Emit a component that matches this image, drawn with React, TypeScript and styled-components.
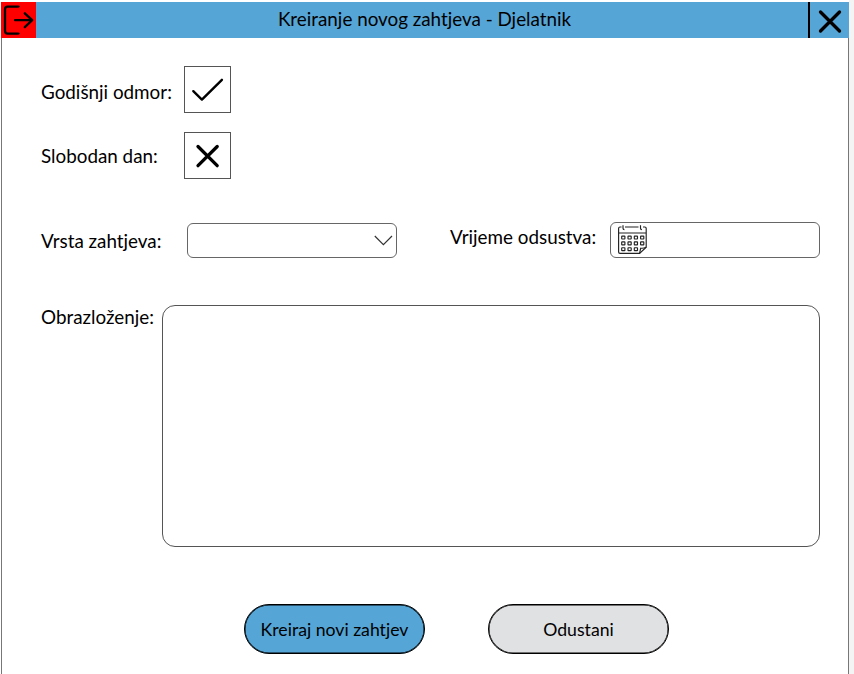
import React from "react";
import styled, { createGlobalStyle } from "styled-components";

const GlobalStyle = createGlobalStyle`
  *, *::before, *::after { box-sizing: border-box; }
  body { margin: 0; background: #f4f4f4; }
`;

const Page = styled.div`
  width: 854px;
  height: 674px;
  padding: 0 5px 0 1px;
  overflow: hidden;
  background: linear-gradient(to right, #fff 0 849px, #f4f4f4 849px);
  color: #000;
  font-family: Lato, "Liberation Sans", sans-serif;
  font-size: 18.83px;
  line-height: 24px;
`;

const Window = styled.main`
  height: 674px;
  padding-top: 2px;
  display: flex;
  flex-direction: column;
`;

const TitleBar = styled.header`
  flex: none;
  display: grid;
  grid-template-columns: 35px 1fr 41px;
  height: 36px;
  background: #55a6d7;
`;

const Title = styled.h1`
  margin: 0;
  padding: 5px 0 0 5px;
  font-size: 18.83px;
  font-weight: 400;
  line-height: 24px;
  text-align: center;
  white-space: nowrap;
`;

const IconButton = styled.button<{ $exit?: boolean }>`
  display: block;
  padding: 0;
  border: 0;
  border-left: ${(p) => (p.$exit ? "0" : "2px solid #000")};
  background: ${(p) => (p.$exit ? "#ff0000" : "transparent")};
  svg { display: block; }
`;

const Form = styled.form`
  flex: 1;
  padding: 28px 28px 0 39px;
  border-left: 1px solid #777;
  border-right: 1px solid #777;
`;

const Row = styled.div<{ $gap: number }>`
  display: flex;
  align-items: flex-start;
  margin-bottom: ${(p) => p.$gap}px;
`;

const Label = styled.label<{ $width: number; $top: number }>`
  flex: none;
  width: ${(p) => p.$width}px;
  padding-top: ${(p) => p.$top}px;
  white-space: nowrap;
`;

const CheckBox = styled.button`
  display: block;
  width: 47px;
  height: 47px;
  padding: 0;
  border: 1px solid #555;
  background: #fff;
  svg { display: block; }
`;

const Field = styled.div<{ $date?: boolean }>`
  flex: none;
  display: flex;
  justify-content: ${(p) => (p.$date ? "flex-start" : "flex-end")};
  width: 210px;
  height: ${(p) => (p.$date ? 36 : 35)}px;
  margin-top: ${(p) => (p.$date ? 0 : 1)}px;
  border: 1px solid #666;
  border-radius: 6px;
  background: #fff;
`;

const DateGroup = styled.div`
  display: flex;
  margin-left: 53px;
`;

const Explanation = styled.textarea`
  display: block;
  width: 658px;
  height: 242px;
  border: 1px solid #555;
  border-radius: 13px;
  background: #fff;
  font: inherit;
  padding: 8px 12px;
  resize: none;
  outline: none;
`;

const Actions = styled.div`
  display: flex;
  gap: 63px;
  padding-left: 203px;
`;

const ActionButton = styled.button<{ $primary?: boolean }>`
  width: 181px;
  height: 50px;
  padding: 2px 0 0;
  border: 1px solid #000;
  box-shadow: inset 0 0 0 0.5px #000;
  border-radius: 25px;
  background: ${(p) => (p.$primary ? "#55a6d7" : "#e0e1e3")};
  color: #000;
  font: inherit;
  font-size: 17.65px;
`;

const ExitIcon = () => (
  <svg width="35" height="36" viewBox="0 0 35 36" fill="none" stroke="#000" strokeWidth="2.3" strokeLinecap="round" strokeLinejoin="round">
    <path d="M17.5 4.6H6.5Q4 4.6 4 7.5V28.5Q4 31.6 6.5 31.6H17.5M14 18.2H31M23.8 11.3L31.2 18.2L23.8 25.1" />
  </svg>
);

const CloseIcon = () => (
  <svg width="39" height="36" viewBox="0 0 39 36" stroke="#000" strokeWidth="3.3" strokeLinecap="round">
    <path d="M10.5 10L29.5 29M29.5 10L10.5 29" />
  </svg>
);

const TickIcon = () => (
  <svg width="45" height="45" viewBox="0 0 45 45" fill="none" stroke="#000" strokeWidth="2.4" strokeLinecap="round" strokeLinejoin="round">
    <path d="M8.3 24.2L16.9 32.6L36.9 12.8" />
  </svg>
);

const CrossIcon = () => (
  <svg width="45" height="45" viewBox="0 0 45 45" stroke="#000" strokeWidth="3.3" strokeLinecap="round">
    <path d="M13 13.5L32.2 32.7M32.2 13.5L13 32.7" />
  </svg>
);

const ChevronIcon = () => (
  <svg width="23" height="33" viewBox="0 0 23 33" fill="none" stroke="#333" strokeWidth="1.2">
    <path d="M1.8 12L10.4 20.6L19 12" />
  </svg>
);

const CalendarIcon = () => (
  <svg width="44" height="34" viewBox="0 0 44 34" fill="none" stroke="#222" strokeWidth="1.15">
    <path d="M10.5 4H9Q7.6 4 7.6 5.5V29Q7.6 30.4 9 30.4H28.6L35.2 24.2V5.5Q35.2 4 33.8 4H32M14 4H27.5M7.6 10H35.2" />
    <path d="M12 2.3V5.3Q12 6.6 13.4 6.6M29.5 2.3V5.3Q29.5 6.6 30.9 6.6M28.6 30.4L29.7 25.2Q32.5 25.6 35.2 24.2" />
    {[13.1, 18.9, 24.7].map((y) =>
      [10.7, 17, 23.3, 29.6].map((x) =>
        y > 24 && x > 29 ? null : <rect key={`${x}-${y}`} x={x} y={y} width="3.2" height="2.9" rx="0.4" />
      )
    )}
  </svg>
);

export default function App() {
  return (
    <Page>
      <GlobalStyle />
      <Window>
        <TitleBar>
          <IconButton $exit aria-label="Odjava"><ExitIcon /></IconButton>
          <Title>Kreiranje novog zahtjeva - Djelatnik</Title>
          <IconButton aria-label="Zatvori"><CloseIcon /></IconButton>
        </TitleBar>
        <Form onSubmit={(e) => e.preventDefault()}>
          <Row $gap={19}>
            <Label $width={143} $top={14}>Godišnji odmor:</Label>
            <CheckBox type="button" aria-label="Godišnji odmor"><TickIcon /></CheckBox>
          </Row>
          <Row $gap={43}>
            <Label $width={143} $top={12}>Slobodan dan:</Label>
            <CheckBox type="button" aria-label="Slobodan dan"><CrossIcon /></CheckBox>
          </Row>
          <Row $gap={47}>
            <Label $width={146} $top={7}>Vrsta zahtjeva:</Label>
            <Field><ChevronIcon /></Field>
            <DateGroup>
              <Label $width={160} $top={3}>Vrijeme odsustva:</Label>
              <Field $date><CalendarIcon /></Field>
            </DateGroup>
          </Row>
          <Row $gap={57}>
            <Label $width={121} $top={0} htmlFor="obrazlozenje">Obrazloženje:</Label>
            <Explanation id="obrazlozenje" />
          </Row>
          <Actions>
            <ActionButton $primary type="submit">Kreiraj novi zahtjev</ActionButton>
            <ActionButton type="button">Odustani</ActionButton>
          </Actions>
        </Form>
      </Window>
    </Page>
  );
}
